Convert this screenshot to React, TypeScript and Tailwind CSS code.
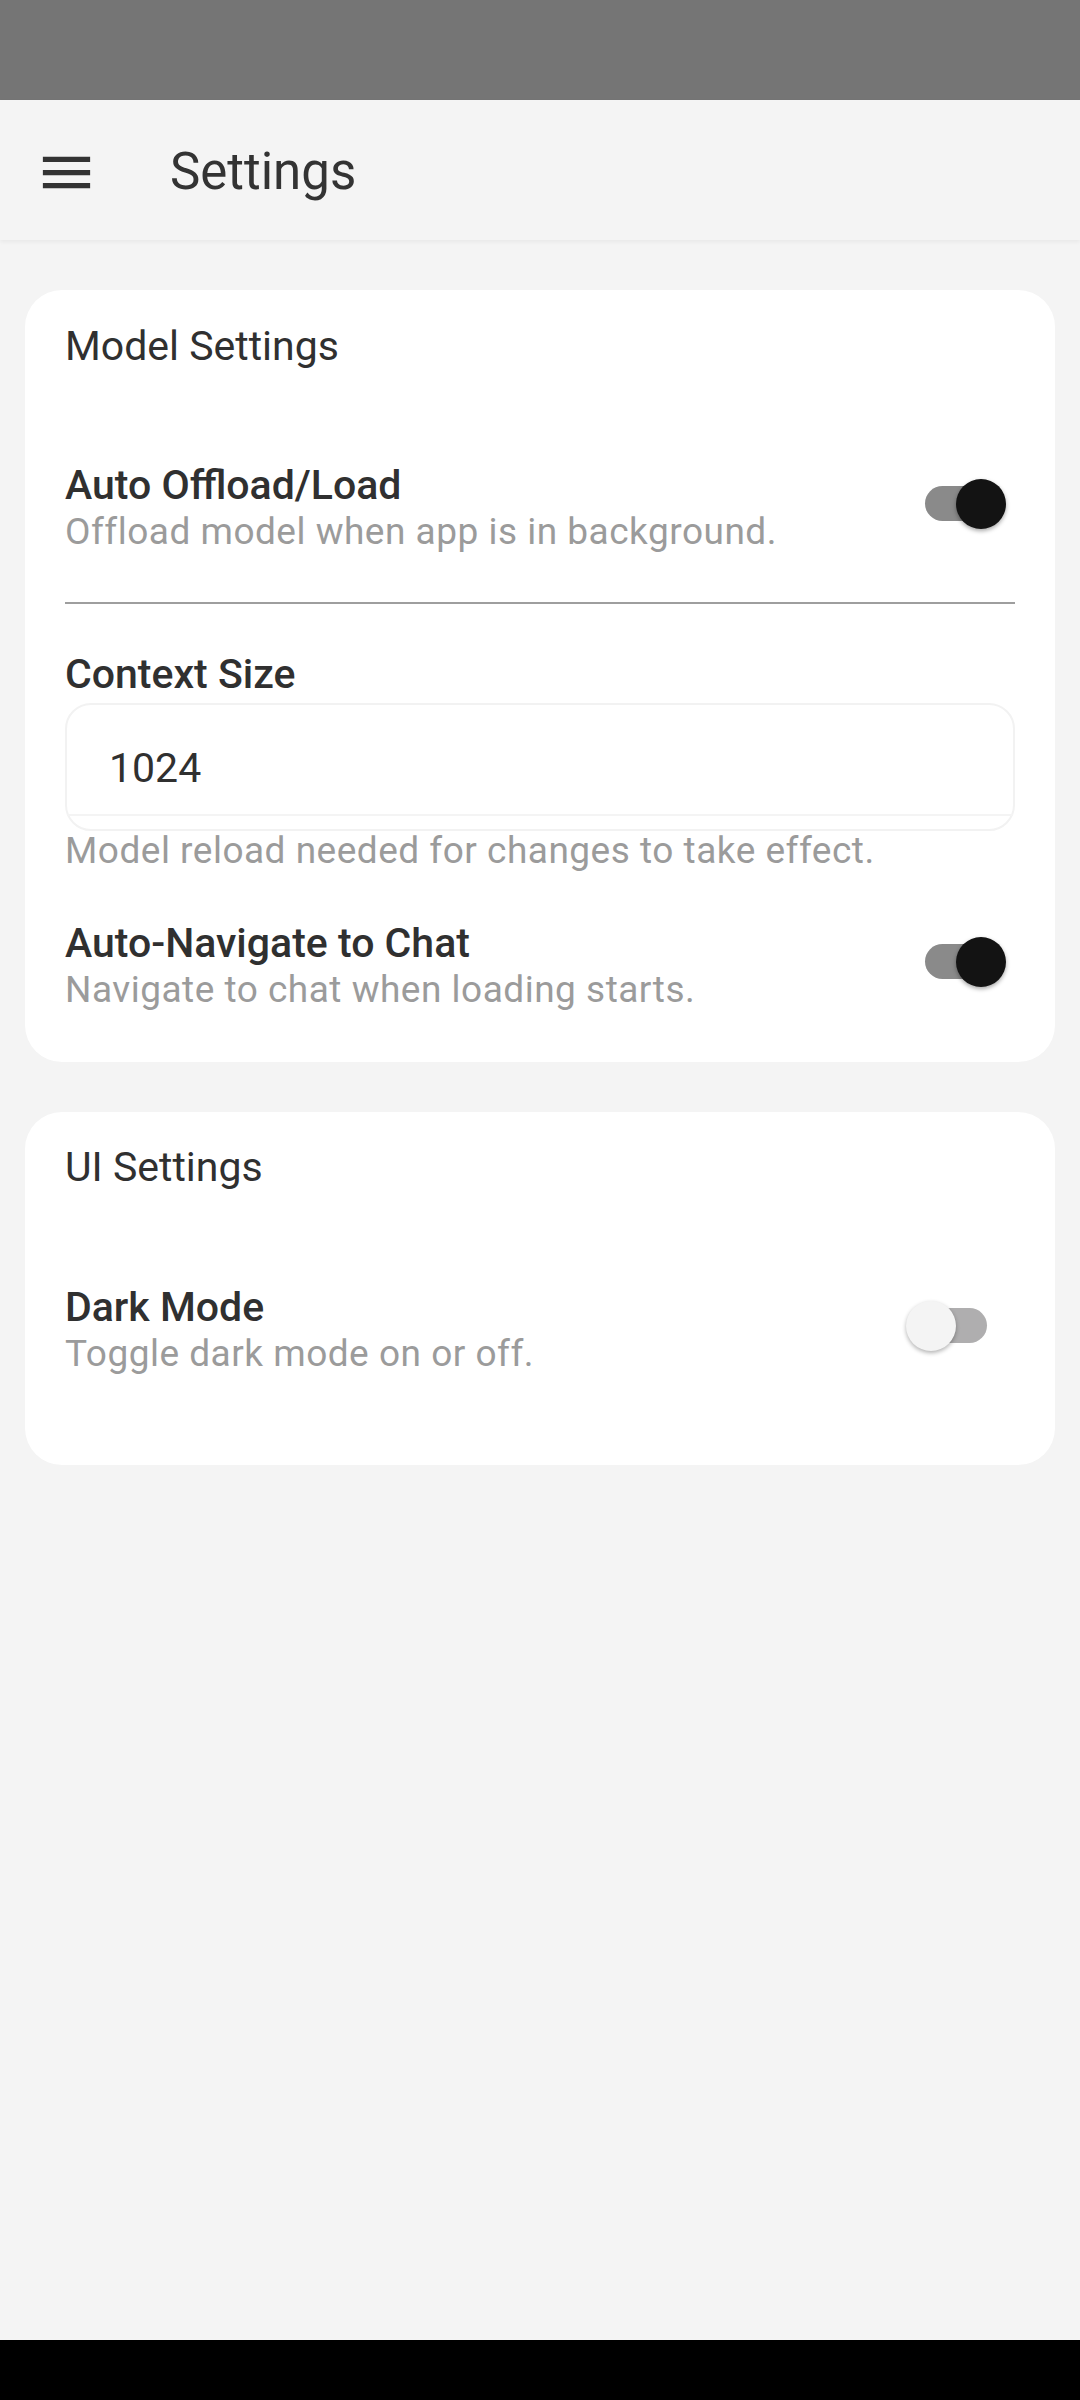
import React from "react";

const font = { fontFamily: "Roboto, 'Noto Sans', sans-serif" };

function Toggle({ on }: { on: boolean }) {
  return (
    <div className="relative w-[100px] h-[50px] shrink-0 mr-[9px] mb-[7px]">
      <div
        className={
          "absolute left-[19px] top-[7.5px] w-[62px] h-[35px] rounded-full " +
          (on ? "bg-[#8a8a8a]" : "bg-[#afaeaf]")
        }
      />
      <div
        className={
          "absolute top-0 w-[50px] h-[50px] rounded-full " +
          (on
            ? "left-[50px] bg-[#131313] shadow-[0_2px_4px_rgba(0,0,0,0.35)]"
            : "left-0 bg-[#f4f4f4] shadow-[0_2px_4px_rgba(0,0,0,0.3)]")
        }
      />
    </div>
  );
}

function Row({ title, sub, on }: { title: string; sub: string; on: boolean }) {
  return (
    <div className="flex items-center">
      <div className="flex-1">
        <div className="text-[41px] leading-[50px] font-medium text-[#303030]">{title}</div>
        <div className="text-[37px] leading-[44px] text-[#9b9b9b] tracking-[0.5px]">{sub}</div>
      </div>
      <Toggle on={on} />
    </div>
  );
}

export default function App() {
  return (
    <div className="w-[1080px] h-[2400px] flex flex-col bg-[#f4f4f4]" style={font}>
      <div className="h-[100px] bg-[#757575] shrink-0" />
      <div className="h-[140px] shrink-0 flex items-center pt-[4px] bg-[#f4f4f4] shadow-[0_2px_4px_rgba(0,0,0,0.05)] relative z-10">
        <svg width="63" height="63" viewBox="0 0 24 24" className="ml-[35px]">
          <path d="M3 18h18v-2H3v2zm0-5h18v-2H3v2zm0-7v2h18V6H3z" fill="#333333" />
        </svg>
        <div className="ml-[72px] text-[51px] leading-[60px] text-[#333333]">Settings</div>
      </div>
      <div className="flex-1 flex flex-col pt-[50px] gap-[50px]">
        <div className="mx-[25px] bg-white rounded-[37px] px-[40px] pt-[31px] pb-[50px]">
          <div className="text-[41px] leading-[50px] text-[#303030]">Model Settings</div>
          <div className="mt-[89px]">
            <Row title="Auto Offload/Load" sub="Offload model when app is in background." on={true} />
          </div>
          <div className="mt-[48px] h-[2px] bg-[#9e9e9e]" />
          <div className="mt-[45px] text-[41px] leading-[50px] font-medium text-[#303030]">Context Size</div>
          <div className="mt-[4px] h-[128px] rounded-[26px] border-2 border-[#f2f2f2] flex flex-col">
            <div className="h-[111px] border-b-2 border-[#f4f4f4] pl-[42px] pt-[38px]">
              <div className="text-[41px] leading-[50px] text-[#303030]">1024</div>
            </div>
          </div>
          <div className="text-[37px] leading-[40px] text-[#9b9b9b] tracking-[0.5px]">
            Model reload needed for changes to take effect.
          </div>
          <div className="mt-[47px]">
            <Row title="Auto-Navigate to Chat" sub="Navigate to chat when loading starts." on={true} />
          </div>
        </div>
        <div className="mx-[25px] bg-white rounded-[37px] px-[40px] pt-[30px] pb-[89px]">
          <div className="text-[41px] leading-[50px] text-[#303030]">UI Settings</div>
          <div className="mt-[90px]">
            <Row title="Dark Mode" sub="Toggle dark mode on or off." on={false} />
          </div>
        </div>
      </div>
      <div className="h-[60px] bg-black shrink-0" />
    </div>
  );
}
